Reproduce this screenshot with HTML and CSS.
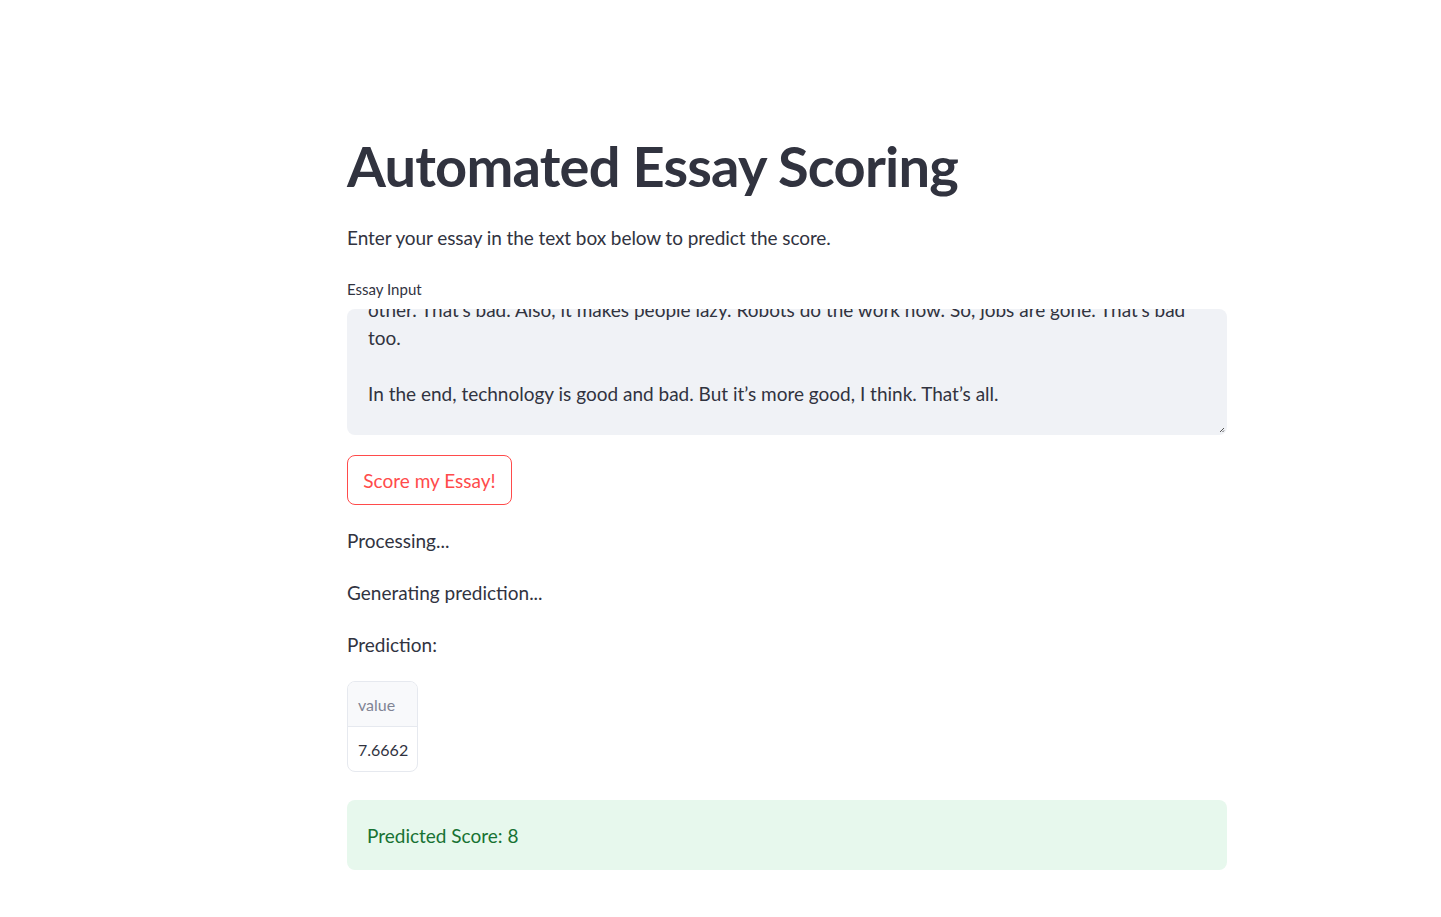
FILE: index.html
```html
<!DOCTYPE html>
<html lang="en">
<head>
<meta charset="utf-8">
<title>Automated Essay Scoring</title>
<link rel="stylesheet" href="styles.css">
</head>
<body>
<main class="main">
  <h1 class="title">Automated Essay Scoring</h1>
  <p class="intro">Enter your essay in the text box below to predict the score.</p>
  <div class="field">
    <label class="field-label">Essay Input</label>
    <div class="textarea">
      <div class="textarea-content">
        <div class="tline">other. That’s bad. Also, it makes people lazy. Robots do the work now. So, jobs are gone. That’s bad</div>
        <div class="tline">too.</div>
        <div class="tline">&nbsp;</div>
        <div class="tline">In the end, technology is good and bad. But it’s more good, I think. That’s all.</div>
      </div>
      <svg class="grip" width="6" height="6" viewBox="0 0 6 6"><path d="M5 1 L1 5 M5 3.5 L3.5 5" stroke="#555" stroke-width="1"/></svg>
    </div>
  </div>
  <button class="btn">Score my Essay!</button>
  <p class="msg msg-first">Processing...</p>
  <p class="msg">Generating prediction...</p>
  <p class="msg">Prediction:</p>
  <table class="df">
    <thead><tr><th>value</th></tr></thead>
    <tbody><tr><td>7.6662</td></tr></tbody>
  </table>
  <div class="success">Predicted Score: 8</div>
</main>
</body>
</html>
```

FILE: styles.css
```css
html, body {
  margin: 0;
  padding: 0;
  background: #ffffff;
}
body {
  font-family: "Lato", "Noto Sans", sans-serif;
  color: #31333f;
}
.main {
  width: 880px;
  margin-left: 347px;
  padding-top: 132px;
  padding-bottom: 40px;
}
.title {
  margin: 0;
  font-size: 56px;
  line-height: 68px;
  font-weight: 700;
  color: #31333f;
  letter-spacing: -0.8px;
}
.intro {
  margin: 24px 0 0;
  font-size: 19px;
  line-height: 28px;
  letter-spacing: -0.08px;
}
.field {
  margin-top: 27px;
  display: flex;
  flex-direction: column;
}
.field-label {
  font-size: 15px;
  line-height: 20px;
  margin-bottom: 10px;
}
.textarea {
  position: relative;
  height: 126px;
  background: #f0f2f6;
  border-radius: 8px;
  overflow: hidden;
  display: flex;
  flex-direction: column;
  justify-content: flex-end;
}
.textarea-content {
  padding: 0 21px 27px;
  font-size: 19px;
  line-height: 28px;
}
.tline {
  white-space: nowrap;
}
.grip {
  position: absolute;
  right: 2px;
  bottom: 2px;
}
.btn {
  display: block;
  margin-top: 20px;
  height: 50px;
  width: 165px;
  padding: 0;
  border: 1px solid #ff4b4b;
  border-radius: 8px;
  background: #ffffff;
  color: #ff4b4b;
  font-family: inherit;
  font-size: 19px;
}
.msg {
  margin: 24px 0 0;
  font-size: 19px;
  line-height: 28px;
}
.msg-first {
  margin-top: 22px;
}
.df {
  margin-top: 22px;
  border-collapse: separate;
  border-spacing: 0;
  border: 1px solid #e6e9ef;
  border-radius: 8px;
  width: 70px;
  overflow: hidden;
  font-size: 16px;
}
.df th {
  height: 44px;
  padding: 0 9px 0 10px;
  text-align: left;
  font-weight: 400;
  color: #808495;
  background: #f8f9fb;
  border-bottom: 1px solid #e6e9ef;
}
.df td {
  height: 44px;
  padding: 0 9px 0 10px;
  text-align: left;
  color: #31333f;
}
.success {
  margin-top: 28px;
  height: 70px;
  display: flex;
  align-items: center;
  padding: 0 20px;
  background: #e7f8ed;
  color: #177233;
  border-radius: 8px;
  font-size: 19px;
}
```
